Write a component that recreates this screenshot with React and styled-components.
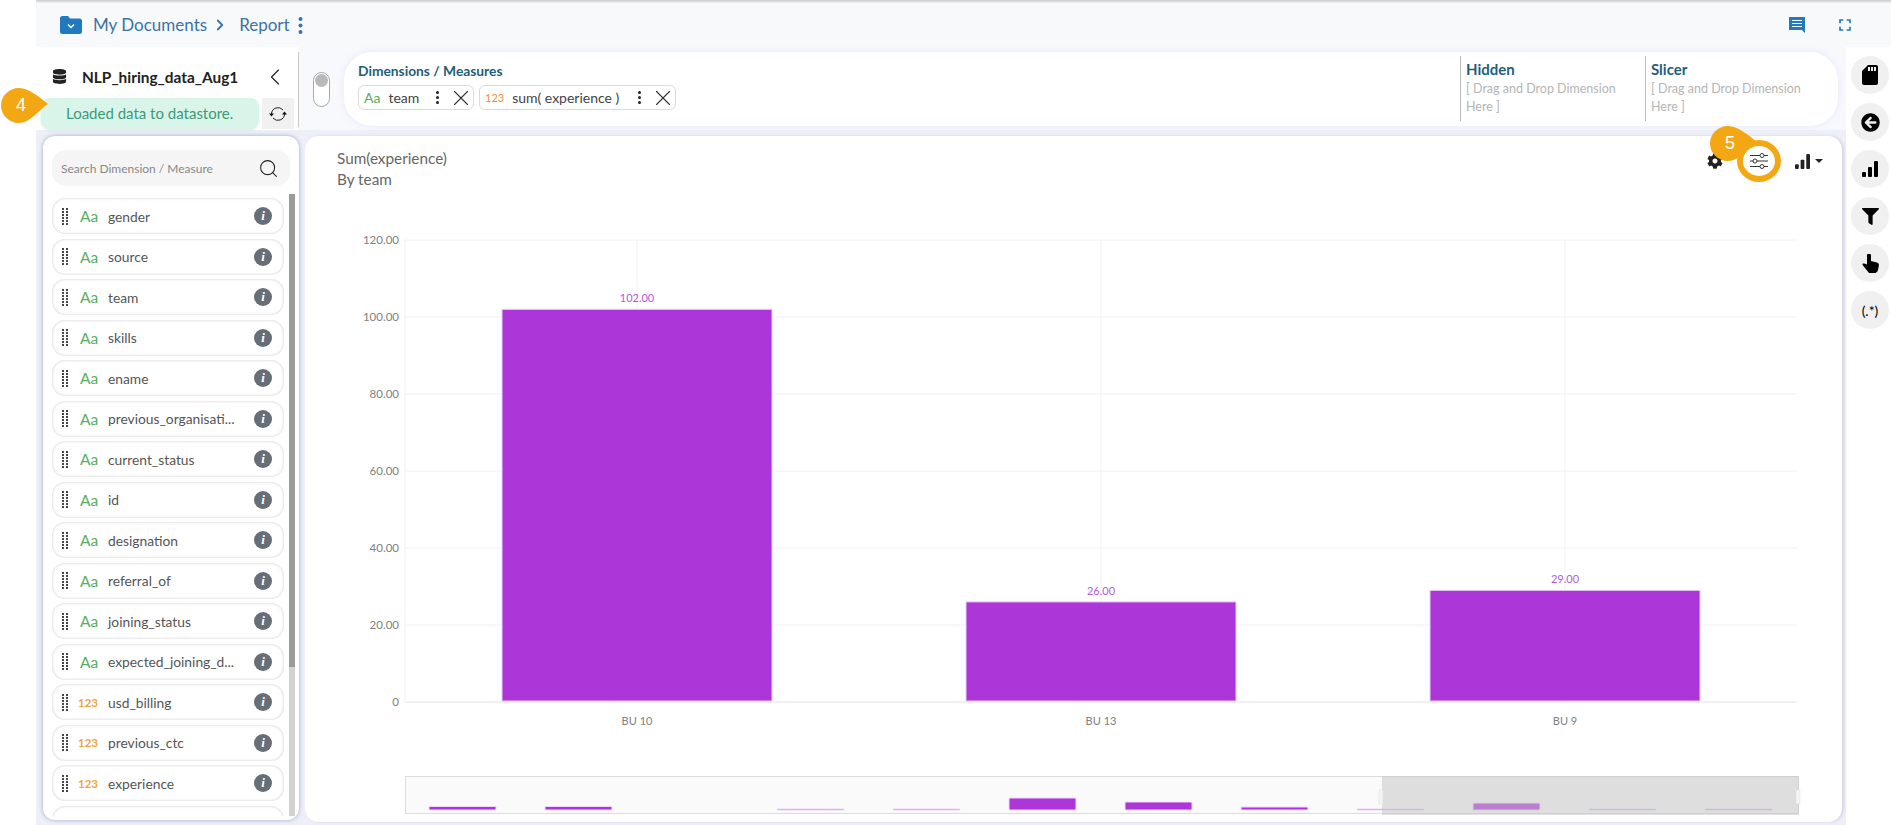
import React from 'react';
import styled, { createGlobalStyle } from 'styled-components';
import { ChevronLeft, ChevronRight, Search, X } from 'lucide-react';
import { FaDatabase, FaCog, FaFilter, FaArrowCircleLeft } from 'react-icons/fa';
import { MdSdCard, MdFullscreen } from 'react-icons/md';

const GlobalStyle = createGlobalStyle`
  html, body {
    margin: 0;
    padding: 0;
    background: #fff;
    font-family: 'Lato', 'Open Sans', sans-serif;
  }
  * { box-sizing: border-box; }
`;

const Page = styled.div`
  position: relative;
  width: 1891px;
  height: 825px;
  overflow: hidden;
  padding: 3px 0 0 36px;
  background: #fff;
  &:before {
    content: '';
    position: absolute;
    top: 0;
    left: 36px;
    right: 0;
    height: 3px;
    background: linear-gradient(#c9c9c9, #f4f4f4);
  }
`;

const TopBar = styled.header`
  height: 44px;
  display: flex;
  align-items: center;
  background: #f8f9fa;
  padding: 0 36px 0 24px;
`;

const Crumb = styled.span`
  color: #3b73a8;
  font-size: 17px;
  margin-left: ${(p) => p.$ml || 0}px;
  padding-bottom: 2px;
`;

const CrumbArrow = styled(ChevronRight)`
  margin-left: 4px;
`;

const CrumbMenu = styled.span`
  display: flex;
  margin-left: 8px;
`;

const BarSpacer = styled.div`
  flex: 1;
`;

const TopIcons = styled.div`
  display: flex;
  align-items: center;
  gap: 29px;
  color: #1f7ac0;
`;

const Body = styled.div`
  display: grid;
  grid-template-columns: 1fr 45px;
  height: 778px;
`;

const Workspace = styled.div`
  display: flex;
  flex-direction: column;
  min-width: 0;
  background: #edf0f8;
`;

const ConfigRow = styled.div`
  display: flex;
  height: 83px;
  background: #f8f9fd;
`;

const SourceBlock = styled.div`
  width: 262px;
  padding: 8px 0 1px 5px;
  background: #fff;
  display: flex;
  flex-direction: column;
`;

const SourceTitle = styled.div`
  display: flex;
  align-items: center;
  height: 43px;
  padding: 0 0 0 11px;
  color: #222;
  font-size: 15.4px;
  font-weight: 700;
`;

const SourceName = styled.span`
  margin-left: 15px;
  width: 179px;
  white-space: nowrap;
`;

const StatusRow = styled.div`
  display: flex;
  gap: 3px;
  height: 31px;
`;

const StatusPill = styled.div`
  width: 218px;
  border-radius: 9px;
  background: #d9f5ea;
  color: #3d9a78;
  font-size: 15px;
  padding-left: 25px;
  line-height: 31px;
  box-shadow: 0 1px 3px rgba(120, 160, 150, 0.25);
`;

const RefreshButton = styled.div`
  width: 32px;
  display: flex;
  align-items: center;
  justify-content: center;
  background: #f1f1f1;
  color: #222;
`;

const ColumnRule = styled.div`
  width: 1px;
  height: 75px;
  margin-top: 5px;
  background: #c9c9c9;
`;

const ToggleWrap = styled.div`
  width: 45px;
  padding: 25px 0 0 14px;
`;

const Toggle = styled.div`
  width: 17px;
  height: 35px;
  border: 1px solid #a6a6a6;
  border-radius: 9px;
  background: #fff;
  padding: 1px;
  &:before {
    content: '';
    display: block;
    width: 13px;
    height: 13px;
    border-radius: 50%;
    background: #b9b9b9;
  }
`;

const ShelfPill = styled.div`
  width: 1494px;
  height: 74px;
  margin-top: 5px;
  display: flex;
  background: #fff;
  border-radius: 28px;
  box-shadow: 0 0 6px rgba(205, 218, 245, 0.5);
`;

const ShelfMain = styled.div`
  width: 1116px;
  padding: 10px 0 0 14px;
`;

const Shelf = styled.div`
  width: 185px;
  margin-top: 4px;
  height: 65px;
  border-left: 1px solid #bdbdbd;
  padding: 4px 0 0 5px;
`;

const ShelfTitle = styled.div`
  color: #1f5f7a;
  font-size: ${(p) => p.$size || 15}px;
  font-weight: 700;
  line-height: 18px;
`;

const ShelfHint = styled.div`
  width: 165px;
  color: #b5b5b5;
  font-size: 12.5px;
  line-height: 18px;
  margin-top: 2px;
`;

const Chips = styled.div`
  display: flex;
  gap: 5px;
  margin-top: 5px;
`;

const Chip = styled.div`
  width: ${(p) => p.$w}px;
  height: 25px;
  display: flex;
  align-items: center;
  padding: 0 5px;
  border: 1px solid #dcdcdc;
  border-radius: 6px;
  color: #444;
  font-size: 14px;
`;

const ChipType = styled.span`
  color: ${(p) => (p.$num ? '#ef8f3c' : '#58ab5e')};
  font-size: ${(p) => (p.$num ? 11 : 14)}px;
  margin-right: ${(p) => (p.$num ? 8 : 8)}px;
`;

const ChipLabel = styled.span`
  flex: 1;
`;

const ChipDots = styled.span`
  display: flex;
  flex-direction: column;
  gap: 2px;
  margin-right: 9px;
  i {
    width: 3px;
    height: 3px;
    border-radius: 50%;
    background: #222;
  }
`;

const ChipClose = styled(X)`
  margin: 0 -6px 0 0;
  flex: none;
  color: #333;
`;

const Main = styled.div`
  flex: 1;
  min-height: 0;
  display: flex;
  gap: 6px;
  padding: 6px 4px 3px 7px;
`;

const FieldPanel = styled.aside`
  position: relative;
  flex: none;
  width: 256px;
  height: 684px;
  padding: 14px 9px 4px;
  background: #fff;
  border-radius: 12px;
  box-shadow: 0 0 4px rgba(110, 120, 160, 0.6);
  overflow: hidden;
`;

const SearchBox = styled.div`
  width: 238px;
  height: 36px;
  display: flex;
  align-items: center;
  justify-content: space-between;
  padding: 0 11px 0 9px;
  background: #f5f5f5;
  border-radius: 14px;
  font-size: 12px;
  color: #888;
`;

const ScrollTrack = styled.div`
  position: absolute;
  top: 58px;
  right: 4px;
  bottom: 4px;
  width: 6px;
  background: #d2d2d2;
`;

const ScrollThumb = styled.div`
  height: 473px;
  background: #9b9b9b;
`;

const FieldList = styled.div`
  margin-top: 12px;
  width: 232px;
  height: 618px;
  overflow: hidden;
  display: flex;
  flex-direction: column;
  gap: 4.5px;
`;

const FieldRow = styled.div`
  flex: none;
  height: 36px;
  display: flex;
  align-items: center;
  background: #fff;
  border-radius: 13px;
  box-shadow: inset 0 0 3px rgba(110, 120, 140, 0.4);
  padding: 0 12px 0 10px;
  color: #555;
  font-size: 13.8px;
`;

const FieldType = styled.span`
  width: 30px;
  margin-left: 9px;
  color: ${(p) => (p.$num ? '#f0a53c' : '#5aae63')};
  font-size: ${(p) => (p.$num ? 11.5 : 15.5)}px;
  font-weight: ${(p) => (p.$num ? 700 : 400)};
  padding-left: ${(p) => (p.$num ? 0 : 2)}px;
`;

const FieldName = styled.span`
  flex: 1;
  white-space: nowrap;
`;

const InfoBadge = styled.span`
  width: 18px;
  height: 18px;
  border-radius: 50%;
  background: #666e78;
  color: #fff;
  font: italic 700 13px/18px 'Liberation Serif', serif;
  text-align: center;
`;

const ChartCard = styled.section`
  position: relative;
  flex: none;
  width: 1537px;
  height: 686px;
  background: #fff;
  border-radius: 14px;
  box-shadow: 2px 0 3px rgba(190, 195, 220, 0.6);
  padding: 12px 0 0 32px;
`;

const ChartHead = styled.div`
  color: #666;
  font-size: 15.3px;
  line-height: 21px;
  height: 42px;
`;

const ChartTools = styled.div`
  position: absolute;
  top: 4px;
  right: 19px;
  display: flex;
  align-items: center;
  color: #222;
`;

const GearSlot = styled.span`
  display: flex;
  margin-right: 14px;
`;

const SliderRing = styled.span`
  position: relative;
  z-index: 4;
  width: 44px;
  height: 42px;
  margin: 0 14px 0 0;
  display: flex;
  align-items: center;
  justify-content: center;
  border: 6px solid #f3a712;
  border-radius: 50%;
  background: #fff;
`;

const Caret = styled.span`
  width: 0;
  height: 0;
  margin-left: 5px;
  border: 4px solid transparent;
  border-top-color: #222;
  border-bottom: 0;
`;

const ChartBox = styled.div`
  margin: 30px 0 0 -32px;
`;

const Marker = styled.div`
  position: absolute;
  left: ${(p) => p.$x}px;
  top: ${(p) => p.$y}px;
  width: 47px;
  height: 35px;
  z-index: 3;
`;

const MarkerNumber = styled.span`
  position: absolute;
  left: 0;
  top: 0;
  width: 40px;
  height: 35px;
  color: #fff;
  font: 18px/35px 'Liberation Sans', sans-serif;
  text-align: center;
`;

const Rail = styled.nav`
  display: flex;
  flex-direction: column;
  gap: 9px;
  padding: 9px 0 0 5px;
  background: #fff;
`;

const RailButton = styled.div`
  flex: none;
  width: 38px;
  height: 38px;
  display: flex;
  align-items: center;
  justify-content: center;
  background: #f0f0f0;
  border-radius: 50%;
  color: #000;
  font-size: 14px;
`;

const fields = [
  ['gender'], ['source'], ['team'], ['skills'], ['ename'],
  ['previous_organisati...'], ['current_status'], ['id'], ['designation'],
  ['referral_of'], ['joining_status'], ['expected_joining_d...'],
  ['usd_billing', true], ['previous_ctc', true], ['experience', true],
];

const bars = [
  { label: 'BU 10', value: 102 },
  { label: 'BU 13', value: 26 },
  { label: 'BU 9', value: 29 },
];

const miniBars = [3.5, 3.5, 0, 1, 1, 12, 8, 3, 1, 7, 1, 1];

const FolderIcon = () => (
  <svg width="22" height="18" viewBox="0 0 22 18">
    <path d="M0 2.500Q0 0 2.500 0H8l2 2.500h9.500Q22 2.500 22 5v10.500q0 2.500-2.500 2.500H2.500Q0 18 0 15.500Z" fill="#1f7ac0" />
    <path d="M8 8.500l3 3 3-3" fill="none" stroke="#fff" strokeWidth="1.400" />
  </svg>
);

const KebabDots = () => (
  <svg width="5" height="19" viewBox="0 0 5 19">
    <circle cx="2.500" cy="3" r="2" fill="#3b73a8" />
    <circle cx="2.500" cy="9.500" r="2" fill="#3b73a8" />
    <circle cx="2.500" cy="16" r="2" fill="#3b73a8" />
  </svg>
);

const CommentIcon = () => (
  <svg width="17" height="16" viewBox="0 0 17 16">
    <path d="M0 0h16v16l-3-3H0Z" fill="currentColor" />
    <path d="M3 3.500h10M3 6.500h10M3 9.500h10" stroke="#fff" strokeWidth="1.200" />
  </svg>
);

const SyncIcon = () => (
  <svg width="18" height="18" viewBox="0 0 18 18">
    <path d="M2.500 9a6.500 6.500 0 0 1 11.500-4M15.500 9a6.500 6.500 0 0 1-11.500 4" fill="none" stroke="#222" strokeWidth="1" />
    <path d="M0 8.500h5L2.500 11.500ZM13 9.500h5L15.500 6.500Z" fill="#111" />
  </svg>
);

const HandIcon = () => (
  <svg width="17" height="19" viewBox="0 0 17 19" fill="#000">
    <path d="M5 1.500a2 2 0 0 1 4 0V7l6 1.500q2 .5 2 2.500l-1 5q-.5 2-2.500 3H7L1 11.500Q0 10 1 9.500q1.500-.5 4 1Z" />
  </svg>
);

const DragGrip = () => (
  <svg width="7" height="17" viewBox="0 0 7 17">
    {[0, 3, 6, 9, 12, 15].map((y) => (
      <g key={y} fill="#444">
        <rect x="0" y={y} width="2" height="2" />
        <rect x="4" y={y} width="2" height="2" />
      </g>
    ))}
  </svg>
);

const SlidersIcon = () => (
  <svg width="18" height="16" viewBox="0 0 18 16" fill="none" stroke="#333" strokeWidth="1">
    <path d="M0 2.500h10M14 2.500h4M0 8h3M7 8h11M0 13.500h10M14 13.500h4" />
    <circle cx="12" cy="2.500" r="2" />
    <circle cx="5" cy="8" r="2" />
    <circle cx="12" cy="13.500" r="2" />
  </svg>
);

const SignalBars = ({ size }) => (
  <svg width={size} height={size} viewBox="0 0 16 16" fill="currentColor">
    <rect x="0" y="11" width="4" height="5" rx="1" />
    <rect x="6" y="6" width="4" height="10" rx="1" />
    <rect x="12" y="0" width="4" height="16" rx="1" />
  </svg>
);

const MarkerShape = () => (
  <svg width="47" height="35" viewBox="0 0 47 35">
    <path d="M18 0C28 0 38 9 47 16C38 22 29 35 18 35C8 35 0 27 0 17.500C0 8 8 0 18 0Z" fill="#f3a712" />
  </svg>
);

const BarChart = () => {
  const plotBottom = 482;
  const unit = 462 / 120;
  return (
    <svg width="1537" height="600" viewBox="0 0 1537 600">
      {[0, 20, 40, 60, 80, 100, 120].map((tick) => {
        const y = plotBottom - tick * unit;
        return (
          <g key={tick}>
            <line x1="100" x2="1492" y1={y} y2={y} stroke={tick === 0 ? '#e2e2e8' : '#f0f0f2'} />
            <text x="94" y={y + 4} textAnchor="end" fontSize="11.500" fill="#808080">
              {tick === 0 ? '0' : `${tick}.00`}
            </text>
          </g>
        );
      })}
      <line x1="100" x2="100" y1="20" y2={plotBottom} stroke="#f0f0f2" />
      {bars.map((b, i) => {
        const cx = 332 + i * 464;
        const y = plotBottom - b.value * unit;
        return (
          <g key={b.label}>
            <line x1={cx} x2={cx} y1="20" y2={plotBottom} stroke="#f0f0f2" />
            <rect x={cx - 135} y={y} width="270" height={b.value * unit - 1} fill="#ad36d8" stroke="#e9cdf5" strokeWidth="1" />
            <text x={cx} y={y - 7} textAnchor="middle" fontSize="11" fill="#b65ad8">{b.value}.00</text>
            <text x={cx} y={plotBottom + 23} textAnchor="middle" fontSize="11" fill="#808080">{b.label}</text>
          </g>
        );
      })}
      <rect x="100.500" y="556.500" width="1393" height="37" fill="#fafafa" stroke="#ddd" />
      {miniBars.map((h, i) => (h > 0 && (
        <rect key={i} x={124 + i * 116} y={590 - h} width="67" height={h} rx="1" fill="#ad36d8" stroke="#f0d8f8" strokeWidth="1" />
      )))}
      <rect x="1077" y="556" width="417" height="39" fill="#c4c4c4" fillOpacity="0.52" />
      <rect x="1074" y="570" width="4" height="14" fill="#f4f4f0" stroke="#ddd" strokeWidth="0.500" />
      <rect x="1491" y="570" width="4" height="14" fill="#f4f4f0" stroke="#ddd" strokeWidth="0.500" />
    </svg>
  );
};

export default function App() {
  return (
    <Page>
      <GlobalStyle />
      <TopBar>
        <FolderIcon />
        <Crumb $ml={11}>My Documents</Crumb>
        <CrumbArrow size={18} color="#3b73a8" strokeWidth={2.4} />
        <Crumb $ml={10}>Report</Crumb>
        <CrumbMenu><KebabDots /></CrumbMenu>
        <BarSpacer />
        <TopIcons>
          <CommentIcon />
          <MdFullscreen size={20} />
        </TopIcons>
      </TopBar>
      <Body>
        <Workspace>
          <ConfigRow>
            <SourceBlock>
              <SourceTitle>
                <FaDatabase size={15} color="#222" />
                <SourceName>NLP_hiring_data_Aug1</SourceName>
                <ChevronLeft size={28} strokeWidth={1} />
              </SourceTitle>
              <StatusRow>
                <StatusPill>Loaded data to datastore.</StatusPill>
                <RefreshButton><SyncIcon /></RefreshButton>
              </StatusRow>
            </SourceBlock>
            <ColumnRule />
            <ToggleWrap><Toggle /></ToggleWrap>
            <ShelfPill>
              <ShelfMain>
                <ShelfTitle $size={13.8}>Dimensions / Measures</ShelfTitle>
                <Chips>
                  <Chip $w={116}>
                    <ChipType>Aa</ChipType>
                    <ChipLabel>team</ChipLabel>
                    <ChipDots><i /><i /><i /></ChipDots>
                    <ChipClose size={26} strokeWidth={1} />
                  </Chip>
                  <Chip $w={197}>
                    <ChipType $num>123</ChipType>
                    <ChipLabel>sum( experience )</ChipLabel>
                    <ChipDots><i /><i /><i /></ChipDots>
                    <ChipClose size={26} strokeWidth={1} />
                  </Chip>
                </Chips>
              </ShelfMain>
              <Shelf>
                <ShelfTitle>Hidden</ShelfTitle>
                <ShelfHint>[ Drag and Drop Dimension Here ]</ShelfHint>
              </Shelf>
              <Shelf>
                <ShelfTitle>Slicer</ShelfTitle>
                <ShelfHint>[ Drag and Drop Dimension Here ]</ShelfHint>
              </Shelf>
            </ShelfPill>
          </ConfigRow>
          <Main>
            <FieldPanel>
              <SearchBox>
                Search Dimension / Measure
                <Search size={21} strokeWidth={1.2} color="#222" />
              </SearchBox>
              <FieldList>
                {fields.map(([name, num]) => (
                  <FieldRow key={name}>
                    <DragGrip />
                    <FieldType $num={num}>{num ? '123' : 'Aa'}</FieldType>
                    <FieldName>{name}</FieldName>
                    <InfoBadge>i</InfoBadge>
                  </FieldRow>
                ))}
                <FieldRow />
              </FieldList>
              <ScrollTrack><ScrollThumb /></ScrollTrack>
            </FieldPanel>
            <ChartCard>
              <ChartHead>Sum(experience)<br />By team</ChartHead>
              <ChartTools>
                <GearSlot><FaCog size={16} /></GearSlot>
                <SliderRing><SlidersIcon /></SliderRing>
                <SignalBars size={15} />
                <Caret />
              </ChartTools>
              <ChartBox><BarChart /></ChartBox>
            </ChartCard>
          </Main>
        </Workspace>
        <Rail>
          <RailButton><MdSdCard size={24} /></RailButton>
          <RailButton><FaArrowCircleLeft size={19} /></RailButton>
          <RailButton><SignalBars size={16} /></RailButton>
          <RailButton><FaFilter size={17} /></RailButton>
          <RailButton><HandIcon /></RailButton>
          <RailButton>(.*)</RailButton>
        </Rail>
      </Body>
      <Marker $x={1} $y={88}><MarkerShape /><MarkerNumber>4</MarkerNumber></Marker>
      <Marker $x={1710} $y={126}><MarkerShape /><MarkerNumber>5</MarkerNumber></Marker>
    </Page>
  );
}
